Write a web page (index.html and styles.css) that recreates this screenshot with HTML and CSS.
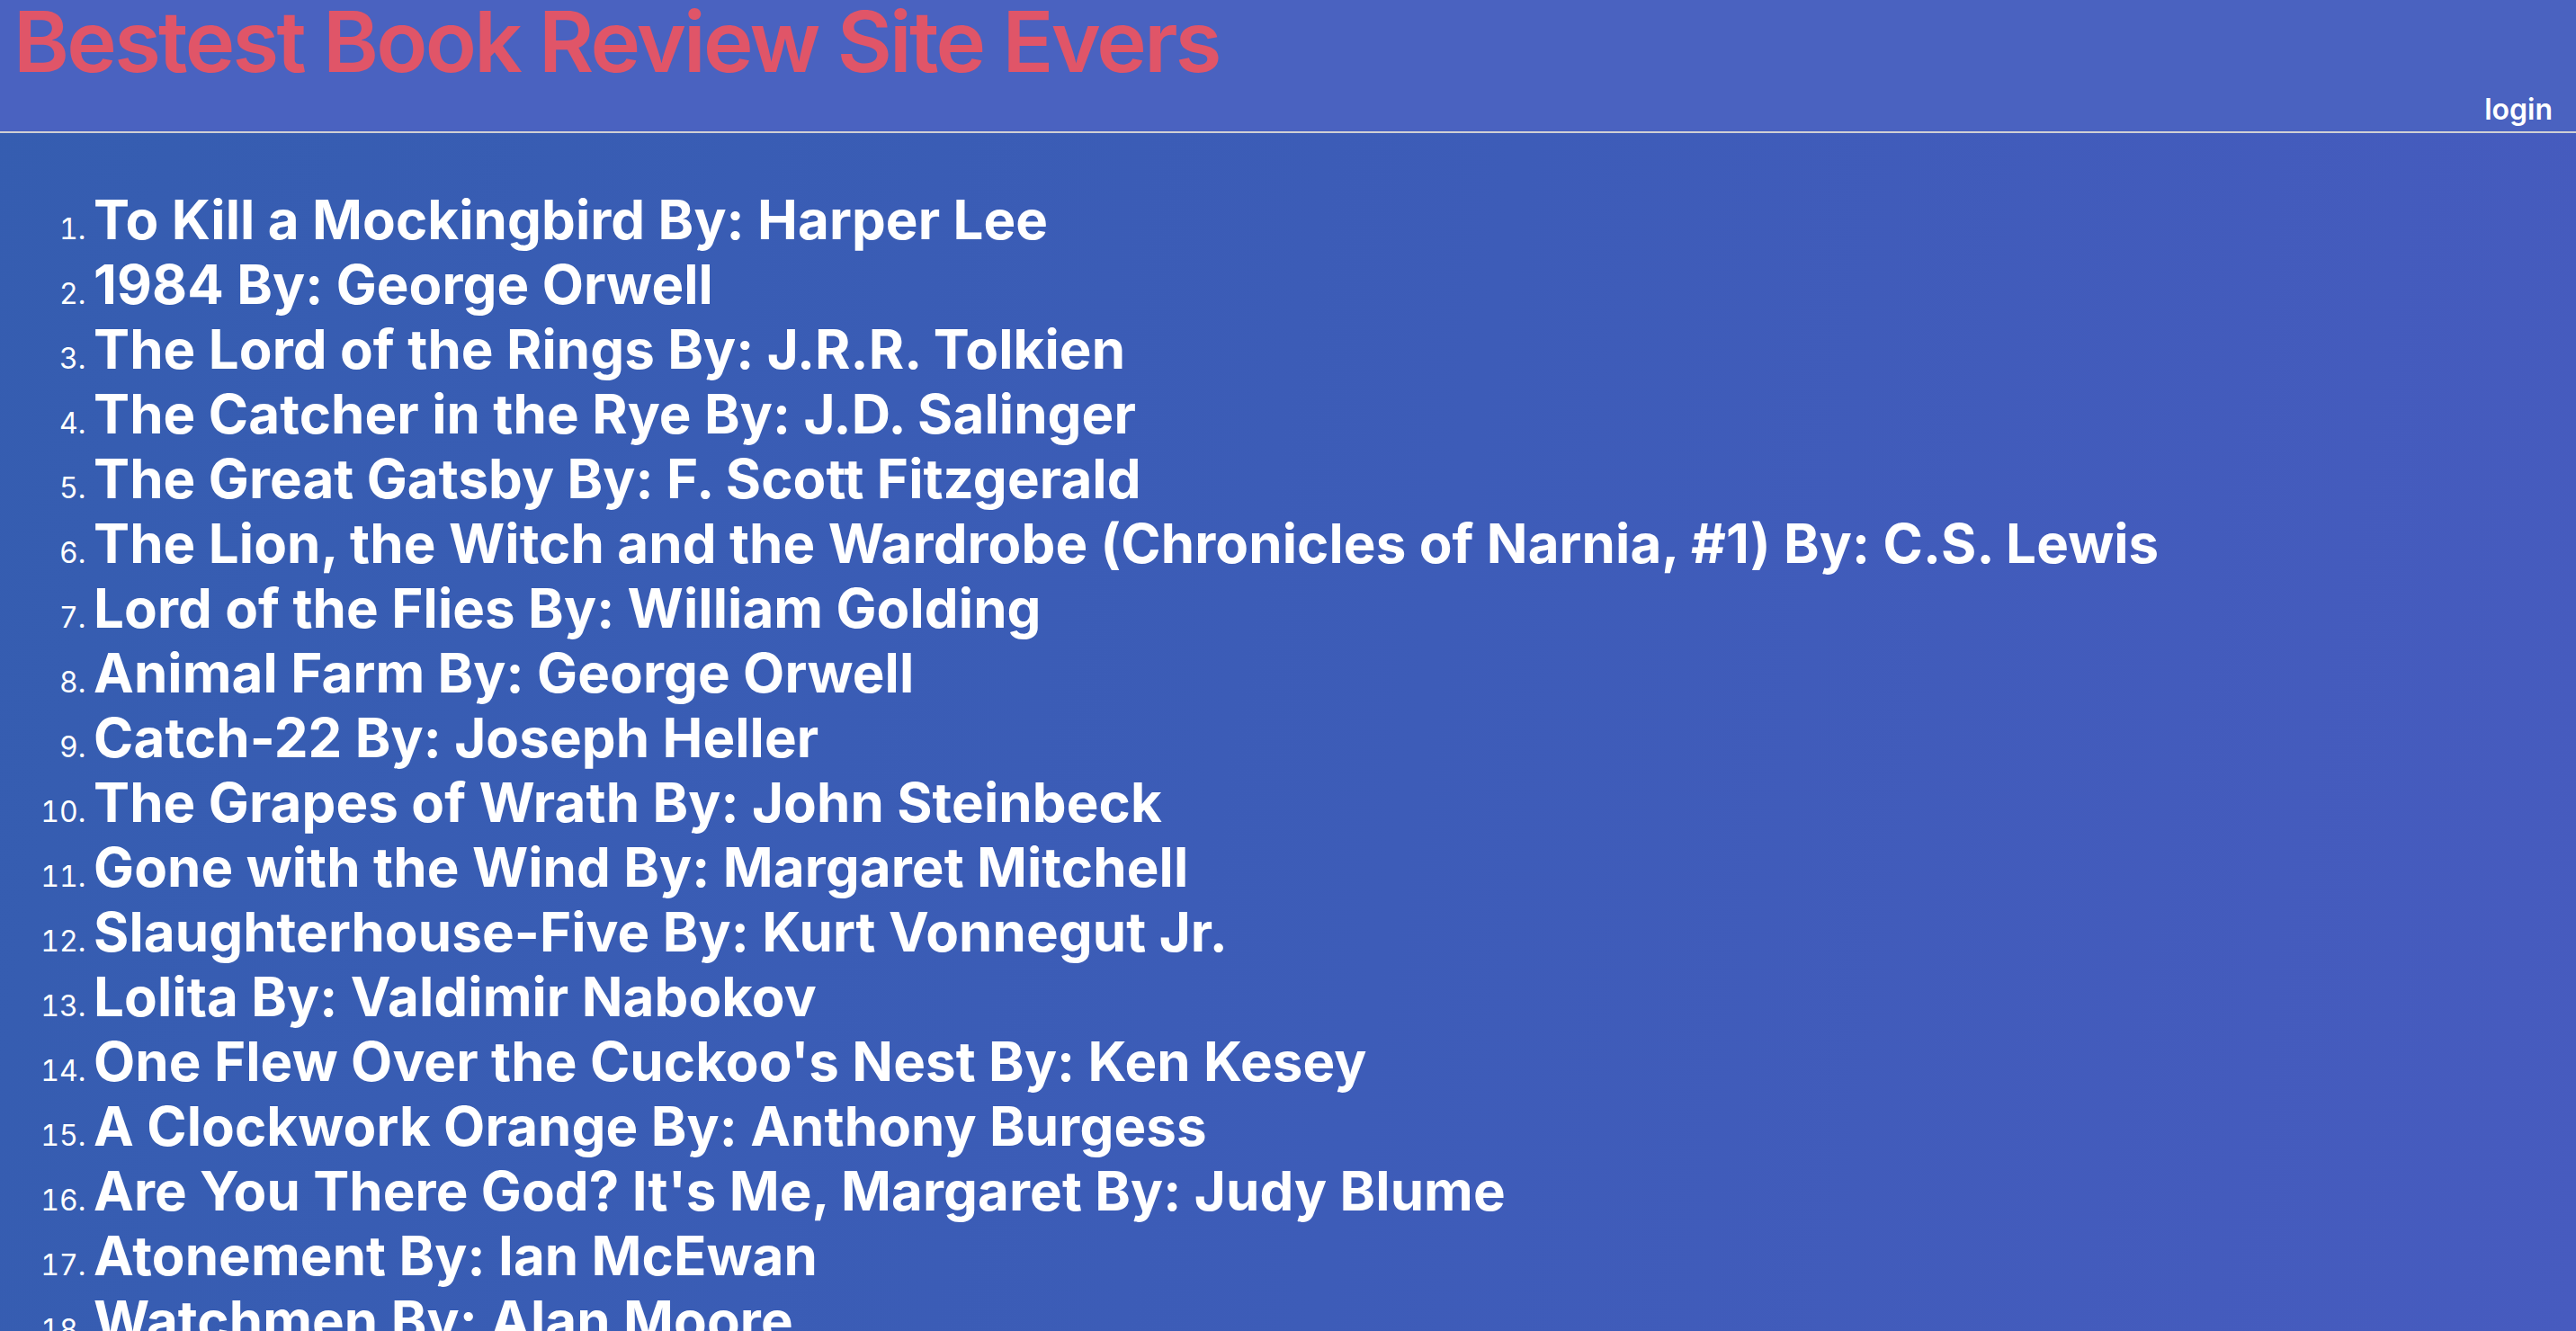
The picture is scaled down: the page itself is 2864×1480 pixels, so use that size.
FILE: index.html
```html
<!DOCTYPE html>
<html lang="en">
<head>
<meta charset="utf-8">
<title>Bestest Book Review Site Evers</title>
<link rel="stylesheet" href="styles.css">
</head>
<body>
<header class="site-header">
  <h1 class="site-title">Bestest Book Review Site Evers</h1>
  <nav class="site-nav"><a class="login-link" href="#">login</a></nav>
</header>
<main class="content">
  <ol class="book-list">
    <li class="book">To Kill a Mockingbird By: Harper Lee</li>
    <li class="book">1984 By: George Orwell</li>
    <li class="book">The Lord of the Rings By: J.R.R. Tolkien</li>
    <li class="book">The Catcher in the Rye By: J.D. Salinger</li>
    <li class="book">The Great Gatsby By: F. Scott Fitzgerald</li>
    <li class="book">The Lion, the Witch and the Wardrobe (Chronicles of Narnia, #1) By: C.S. Lewis</li>
    <li class="book">Lord of the Flies By: William Golding</li>
    <li class="book">Animal Farm By: George Orwell</li>
    <li class="book">Catch-22 By: Joseph Heller</li>
    <li class="book">The Grapes of Wrath By: John Steinbeck</li>
    <li class="book">Gone with the Wind By: Margaret Mitchell</li>
    <li class="book">Slaughterhouse-Five By: Kurt Vonnegut Jr.</li>
    <li class="book">Lolita By: Valdimir Nabokov</li>
    <li class="book">One Flew Over the Cuckoo's Nest By: Ken Kesey</li>
    <li class="book">A Clockwork Orange By: Anthony Burgess</li>
    <li class="book">Are You There God? It's Me, Margaret By: Judy Blume</li>
    <li class="book">Atonement By: Ian McEwan</li>
    <li class="book">Watchmen By: Alan Moore</li>
  </ol>
</main>
</body>
</html>
```

FILE: styles.css
```css
html, body {
  margin: 0;
  padding: 0;
}

body {
  font-family: Inter, "Noto Sans", "Liberation Sans", sans-serif;
  color: #ffffff;
  background: linear-gradient(100deg, #355db0 0%, #3d5cb8 55%, #475bbf 100%);
  min-height: 100vh;
  overflow: hidden;
}

.site-header {
  background: #4a62c0;
  height: 146px;
  border-bottom: 2px solid #cfcfd4;
  display: flex;
  flex-direction: column;
  box-sizing: content-box;
  padding: 0 26px 0 15px;
}

.site-title {
  margin: 0;
  color: #e05568;
  font-size: 94px;
  font-weight: 600;
  line-height: 92px;
  letter-spacing: -2.7px;
}

.site-nav {
  margin-top: auto;
  display: flex;
  justify-content: flex-end;
  padding-bottom: 4px;
}

.login-link {
  color: #ffffff;
  text-decoration: none;
  font-size: 32px;
  font-weight: 600;
  line-height: 40px;
}

.content {
  padding-top: 60px;
}

.book-list {
  margin: 0;
  padding-left: 104px;
}

.book {
  font-size: 60px;
  font-weight: 700;
  line-height: 72px;
  letter-spacing: 0.1px;
  white-space: nowrap;
}

.book::marker {
  font-size: 32px;
  font-weight: 400;
  letter-spacing: 0;
}
```
